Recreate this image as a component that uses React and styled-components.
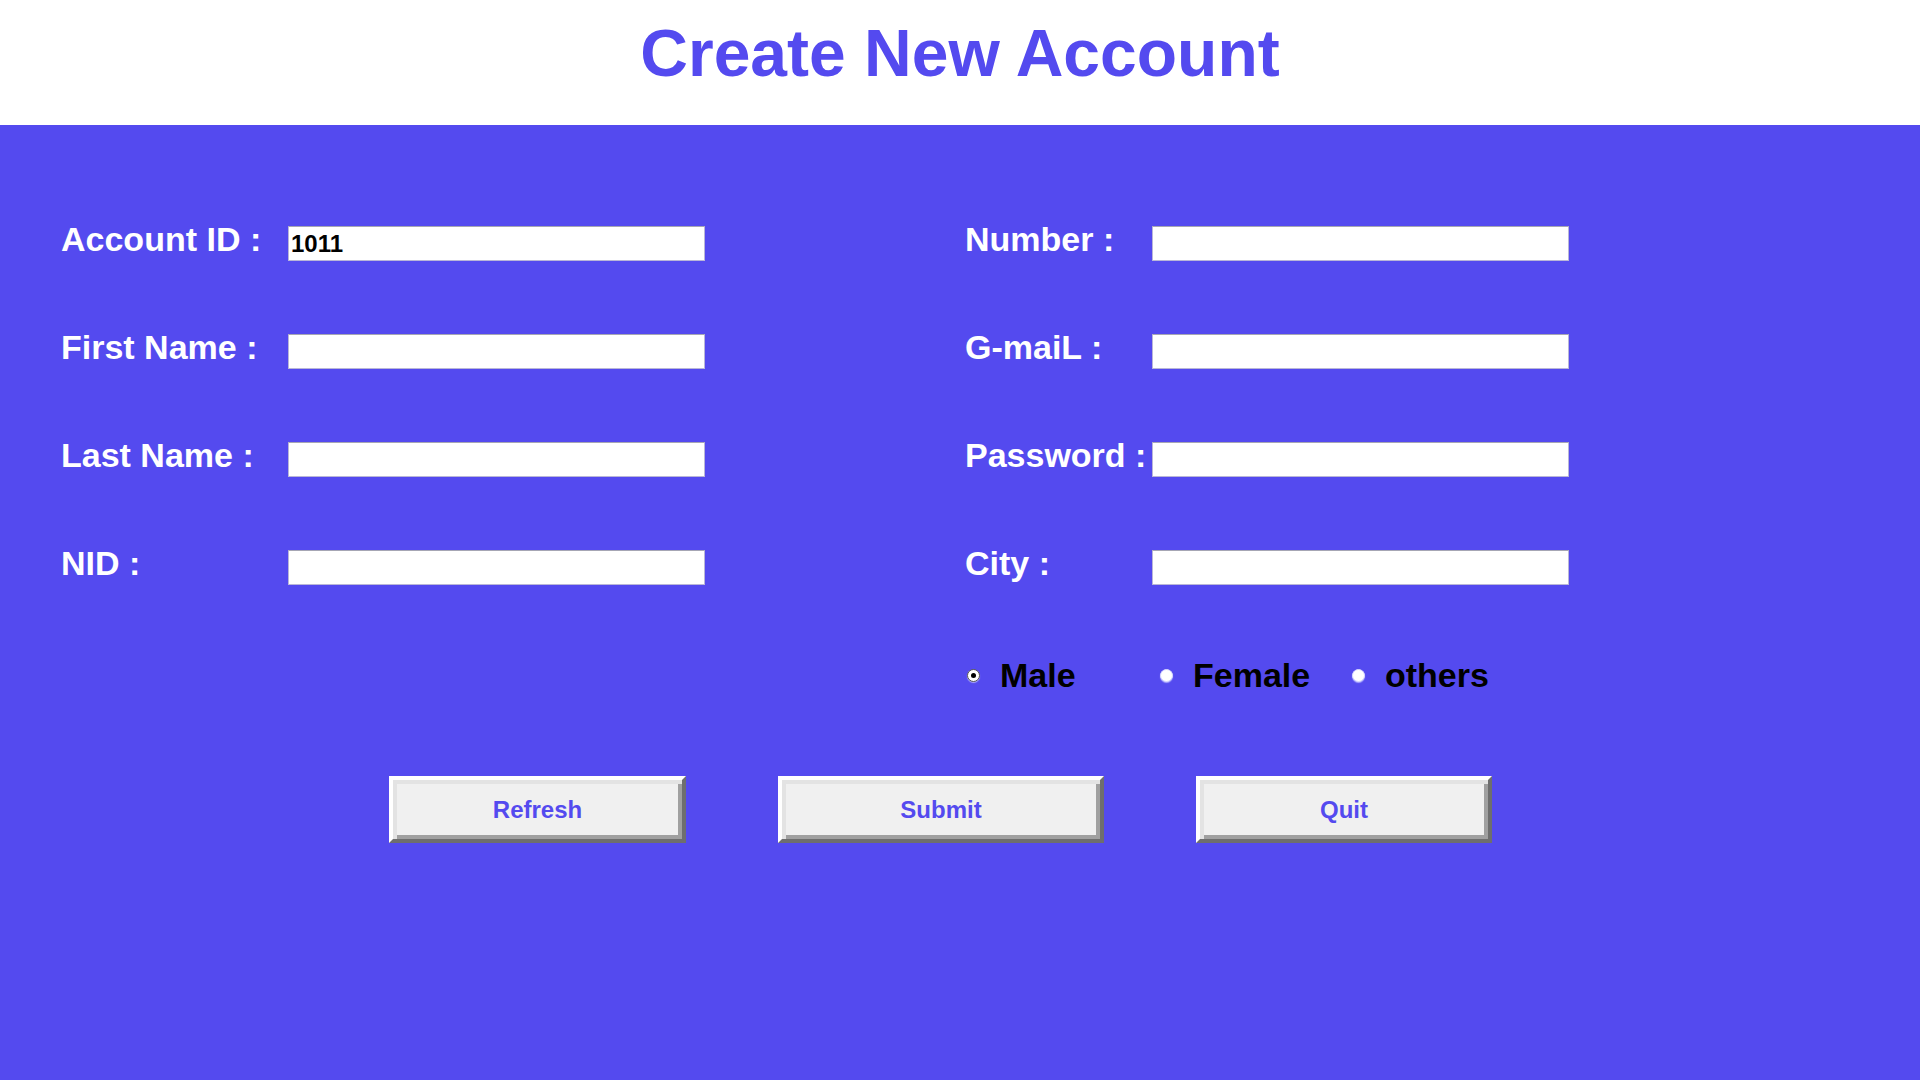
import React from 'react'
import styled, { createGlobalStyle } from 'styled-components'

const BLUE = '#544aef'

const GlobalStyle = createGlobalStyle`
    html, body {
        margin: 0;
        padding: 0;
        background: ${BLUE};
        font-family: "Liberation Sans", Arial, sans-serif;
    }
    * {
        box-sizing: border-box;
    }
`

const Page = styled.div`
    min-height: 100vh;
    display: flex;
    flex-direction: column;
    background: ${BLUE};
`

const Header = styled.header`
    height: 125px;
    background: #ffffff;
    display: flex;
    justify-content: center;
    align-items: flex-start;
    padding-top: 20px;
`

const Title = styled.h1`
    margin: 0;
    font-size: 66px;
    line-height: 66px;
    font-weight: 700;
    color: ${BLUE};
`

const Body = styled.main`
    display: flex;
    flex-direction: column;
    padding-top: 101px;
`

const FormGrid = styled.div`
    display: grid;
    grid-template-columns: 227px 417px 260px 187px 417px;
    grid-auto-rows: 35px;
    row-gap: 73px;
    padding-left: 61px;
`

const Label = styled.label`
    grid-column: ${p => p.$col};
    align-self: center;
    padding-bottom: 8px;
    font-size: 34px;
    line-height: 35px;
    font-weight: 700;
    color: #ffffff;
    white-space: nowrap;
`

const Field = styled.input`
    grid-column: ${p => p.$col};
    width: 100%;
    height: 35px;
    margin: 0;
    padding: 0 2px;
    border: 1px solid #b9b6d8;
    border-top-color: #a6a6b4;
    background: #ffffff;
    font-family: "Liberation Sans", Arial, sans-serif;
    font-size: 24px;
    font-weight: 700;
    color: #000000;
    outline: none;
`

const RadioRow = styled.div`
    display: flex;
    align-items: center;
    height: 40px;
    margin-top: 70px;
    padding-left: 967px;
`

const RadioItem = styled.label`
    display: flex;
    align-items: center;
    gap: 20px;
    width: ${p => p.$width}px;
    font-size: 34px;
    font-weight: 700;
    color: #000000;
`

const RadioDot = styled.span`
    width: 13px;
    height: 13px;
    border-radius: 50%;
    background: #ffffff;
    box-shadow: 0 1px 1px rgba(180, 180, 255, 0.9);
    border: 1px solid ${p => (p.$checked ? '#555' : '#d8d8ff')};
    display: flex;
    align-items: center;
    justify-content: center;
    flex-shrink: 0;
    &::after {
        content: '';
        width: 5px;
        height: 5px;
        border-radius: 50%;
        background: ${p => (p.$checked ? '#000' : 'transparent')};
    }
`

const ButtonRow = styled.div`
    display: flex;
    gap: 92px;
    margin-top: 81px;
    padding-left: 389px;
`

const Button = styled.button`
    width: ${p => p.$width}px;
    height: 67px;
    margin: 0;
    padding: 0;
    background: #f0f0f0;
    border: 4px solid;
    border-color: #ffffff #6e6e6e #6e6e6e #ffffff;
    box-shadow: inset 4px 4px 0 #e3e3e3, inset -4px -4px 0 #a0a0a0;
    font-family: "Liberation Sans", Arial, sans-serif;
    font-size: 24px;
    font-weight: 700;
    color: ${BLUE};
    cursor: pointer;
`

const fields = [
    ['Account ID :', '1011', 'Number :'],
    ['First Name :', '', 'G-maiL :'],
    ['Last Name :', '', 'Password :'],
    ['NID :', '', 'City :'],
]

export default function App() {
    return (
        <Page>
            <GlobalStyle />
            <Header>
                <Title>Create New Account</Title>
            </Header>
            <Body>
                <FormGrid>
                    {fields.map(([left, value, right]) => (
                        <React.Fragment key={left}>
                            <Label $col={1}>{left}</Label>
                            <Field $col={2} defaultValue={value} />
                            <Label $col={4}>{right}</Label>
                            <Field $col={5} type={right === 'Password :' ? 'password' : 'text'} />
                        </React.Fragment>
                    ))}
                </FormGrid>
                <RadioRow>
                    <RadioItem $width={193}><RadioDot $checked />Male</RadioItem>
                    <RadioItem $width={192}><RadioDot />Female</RadioItem>
                    <RadioItem $width={200}><RadioDot />others</RadioItem>
                </RadioRow>
                <ButtonRow>
                    <Button $width={297}>Refresh</Button>
                    <Button $width={326}>Submit</Button>
                    <Button $width={296}>Quit</Button>
                </ButtonRow>
            </Body>
        </Page>
    )
}
